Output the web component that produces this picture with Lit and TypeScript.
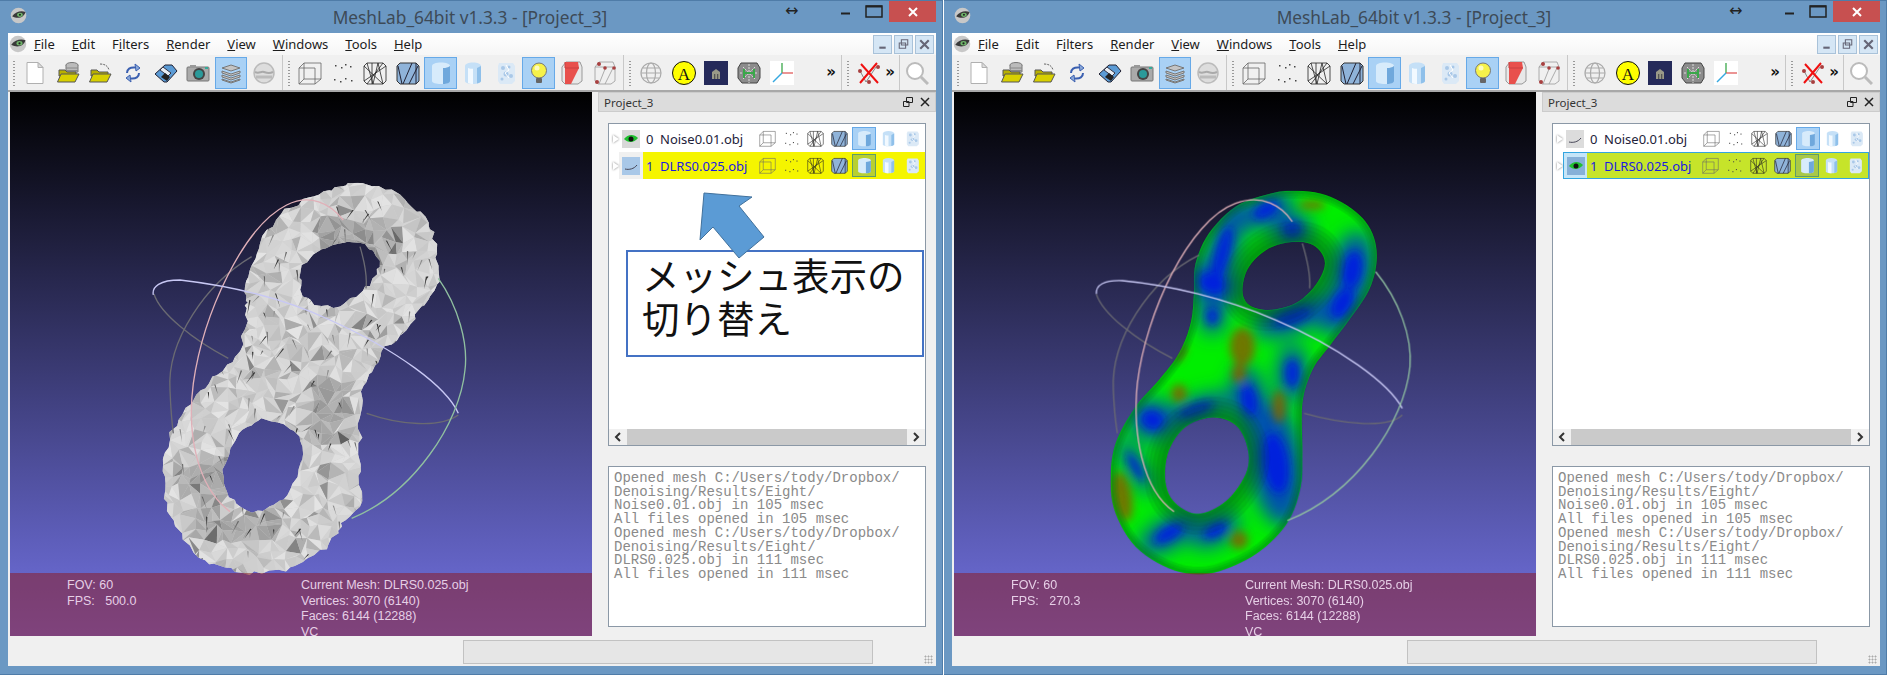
import { css, html, svg, LitElement } from "lit";
import { customElement, property } from "lit/decorators.js";

type Pt = [number, number];

function rng(seed: number) {
    return () => {
        seed = (seed + 0x6d2b79f5) | 0;
        let t = Math.imul(seed ^ (seed >>> 15), 1 | seed);
        t = (t + Math.imul(t ^ (t >>> 7), 61 | t)) ^ t;
        return ((t ^ (t >>> 14)) >>> 0) / 4294967296;
    };
}

// closed catmull-rom through the points, returned as a polyline path
function loop(points: Pt[], steps: number, jitter = 0, seed = 1) {
    const r = rng(seed);
    const n = points.length;
    let d = "";
    for (let i = 0; i < n; i++) {
        const [p0, p1, p2, p3] = [points[(i + n - 1) % n], points[i], points[(i + 1) % n], points[(i + 2) % n]];
        for (let s = 0; s < steps; s++) {
            const t = s / steps;
            const f = (a: number, b: number, c: number, e: number) =>
                0.5 * (2 * b + (c - a) * t + (2 * a - 5 * b + 4 * c - e) * t * t + (3 * b - a - 3 * c + e) * t * t * t);
            const x = f(p0[0], p1[0], p2[0], p3[0]) + (r() - 0.5) * jitter;
            const y = f(p0[1], p1[1], p2[1], p3[1]) + (r() - 0.5) * jitter;
            d += `${d ? "L" : "M"}${x.toFixed(1)} ${y.toFixed(1)}`;
        }
    }
    return d + "Z";
}

const ROUGH_OUTER: Pt[] = [[680, 45], [790, 65], [860, 120], [905, 180], [920, 250], [925, 330], [880, 400], [830, 480], [770, 530], [720, 600], [695, 680], [690, 780], [690, 900], [690, 1000], [640, 1060], [600, 1120], [520, 1180], [420, 1205], [320, 1205], [220, 1170], [150, 1090], [110, 1000], [100, 900], [115, 810], [160, 730], [220, 650], [290, 590], [340, 500], [350, 420], [350, 370], [365, 280], [400, 200], [470, 120], [550, 80], [620, 55]];
const ROUGH_UPPER: Pt[] = [[640, 215], [700, 225], [745, 275], [730, 330], [680, 375], [610, 410], [540, 395], [510, 350], [520, 290], [570, 240]];
const ROUGH_LOWER: Pt[] = [[400, 750], [480, 775], [520, 830], [510, 900], [470, 970], [420, 1015], [350, 1020], [300, 980], [280, 920], [300, 830], [350, 770]];
const ROUGH_SHAPE = loop(ROUGH_OUTER, 5, 15, 3) + loop(ROUGH_UPPER, 4, 12, 5) + loop(ROUGH_LOWER, 4, 12, 7);

const SMOOTH_OUTER: Pt[] = [[640, 62], [740, 75], [830, 125], [880, 190], [893, 270], [870, 360], [810, 450], [750, 530], [700, 600], [670, 700], [670, 850], [665, 950], [630, 1050], [560, 1130], [470, 1185], [370, 1213], [270, 1195], [170, 1130], [110, 1030], [95, 930], [110, 820], [170, 710], [240, 630], [300, 550], [335, 460], [345, 370], [350, 280], [390, 190], [470, 110], [560, 75]];
const SMOOTH_UPPER: Pt[] = [[650, 215], [710, 230], [738, 280], [710, 345], [650, 400], [570, 420], [510, 405], [490, 360], [510, 290], [570, 235]];
const SMOOTH_LOWER: Pt[] = [[400, 742], [470, 765], [505, 830], [505, 900], [460, 975], [400, 1020], [340, 1030], [280, 990], [258, 925], [270, 840], [320, 770]];
const SMOOTH_HOLES = loop(SMOOTH_UPPER, 6) + loop(SMOOTH_LOWER, 6);
const SMOOTH_SHAPE = loop(SMOOTH_OUTER, 6) + SMOOTH_HOLES;

// the triangles of the noisy mesh, on a jittered grid
function facets() {
    const r = rng(42);
    const cell = 32;
    const grid: Pt[][] = [];
    for (let j = 0; j < 40; j++) {
        const row: Pt[] = [];
        for (let i = 0; i < 30; i++) row.push([60 + i * cell + (r() - 0.5) * 28, 20 + j * cell + (r() - 0.5) * 28]);
        grid.push(row);
    }
    const out: { d: string; c: string }[] = [];
    const shade = (x: number, y: number) => {
        let v = 196 + r() * 32;
        const k = r();
        if (k < 0.2) v = 170 + r() * 24;
        if (k < 0.03) v = 130 + r() * 30;
        // creases round the holes are darker
        const crease = (x > 560 && x < 800 && y > 130 && y < 240) || (x > 180 && x < 420 && y > 1010 && y < 1100) || (x > 130 && x < 290 && y > 850 && y < 980) || (x > 530 && x < 640 && y > 620 && y < 800);
        if (crease) v -= 38;
        const g = Math.round(v);
        return `rgb(${g},${g},${g})`;
    };
    for (let j = 0; j < 39; j++) {
        for (let i = 0; i < 29; i++) {
            const a = grid[j][i], b = grid[j][i + 1], c = grid[j + 1][i + 1], e = grid[j + 1][i];
            const t1 = r() > 0.5 ? [a, b, c] : [a, b, e];
            const t2 = t1[2] === c ? [a, c, e] : [b, c, e];
            for (const t of [t1, t2]) {
                out.push({ d: `M${t[0][0]} ${t[0][1]}L${t[1][0]} ${t[1][1]}L${t[2][0]} ${t[2][1]}Z`, c: shade(t[0][0], t[0][1]) });
            }
        }
    }
    // thin black slivers along the folds
    for (let i = 0; i < 170; i++) {
        const x = 120 + r() * 780, y = 90 + r() * 1090, l = 14 + r() * 34, a = 1 + r() * 1.3;
        const dx = Math.cos(a) * l, dy = Math.sin(a) * l;
        const k = r();
        out.push({ d: `M${x} ${y}L${x + dx} ${y + dy}L${x + 4} ${y + 1}Z`, c: k > 0.6 ? "#333" : k > 0.3 ? "#666" : "#8a8a8a" });
    }
    return out;
}
const FACETS = facets();

const ringsLeft = {
    back: ["M690 230C705 280 712 320 708 355", "M985 735C930 775 810 765 710 730", "M72 372C90 430 190 510 295 565", "M365 260C230 340 110 510 120 660C122 710 126 760 130 790"],
    pink: "M300 1025C200 950 170 790 190 640C220 430 340 170 470 105C540 70 600 100 640 150",
    blue: "M985 730C950 650 800 540 600 450C450 380 280 345 150 330C90 330 65 350 70 375",
    green: "M925 325C985 410 1015 520 1005 600C990 760 850 970 665 1045",
};
const ringsRight = {
    back: ["M670 220C685 270 695 320 692 355", "M970 735C930 775 800 765 675 730", "M52 372C70 430 170 510 280 565", "M360 255C210 330 95 510 103 660C105 710 110 760 115 790"],
    pink: "M285 1025C190 960 160 790 175 640C200 430 330 150 470 100C550 70 610 110 640 155",
    blue: "M970 715C930 640 780 530 590 450C440 385 270 345 130 332C75 330 50 345 52 372",
    green: "M890 305C960 390 1000 500 993 590C975 760 830 970 625 1052",
};

const BLUE: number[][] = [[430, 250, 30, 120, 15], [400, 340, 60, 45, 20], [560, 120, 60, 30, -30], [640, 180, 40, 35, 0], [820, 300, 42, 80, 10], [640, 440, 85, 32, -20], [790, 400, 40, 70, 30], [590, 880, 55, 130, -8], [220, 750, 50, 42, 20], [270, 1090, 70, 30, -30], [410, 1080, 55, 28, -30], [170, 890, 18, 70, -30], [400, 440, 26, 36, 0], [640, 610, 30, 60, 0], [350, 720, 80, 24, -20], [510, 690, 34, 70, -10]];
const BROWN: number[][] = [[490, 530, 42, 64, 0], [480, 610, 24, 34, 0], [300, 670, 26, 30, 0], [130, 980, 32, 84, -10], [700, 105, 44, 14, 0], [600, 710, 22, 54, 0], [480, 1110, 30, 30, 0], [305, 550, 12, 34, 30]];
const BANDS = [28, 52, 76, 100, 124];

const ICONS: Record<string, unknown> = {
    doc: svg`<path d="M4 1.500h11l5 5v16H4z" fill="#fff" stroke="#b0b0b0"/><path d="M15 1.500v5h5z" fill="#ddd" stroke="#b0b0b0"/>`,
    open: svg`<ellipse cx="16" cy="4" rx="6" ry="2.500" fill="#bbb" stroke="#777"/><path d="M10 4v7h12V4" fill="#bbb" stroke="#777"/><path d="M10 7h12M10 9.500h12" stroke="#888"/><path d="M3 9h6l2 2h9v4H3z" fill="#b8b000" stroke="#555"/><path d="M1.500 21 5 13h18l-4 8z" fill="#d8d000" stroke="#555"/>`,
    recent: svg`<path d="M12 3c5 0 8 2 9 6" fill="none" stroke="#666" stroke-dasharray="2 1"/><path d="M3 9h6l2 2h9v4H3z" fill="#b8b000" stroke="#555"/><path d="M1.500 21 5 13h18l-4 8z" fill="#d8d000" stroke="#555"/>`,
    reload: svg`<path d="M6 12C6 8 9 6 14 6.500" fill="none" stroke="#3a5fb0" stroke-width="2"/><path d="M14 3l5 4-4 3z" fill="#8aa8d8" stroke="#3a5fb0"/><path d="M18 12c0 4-3 6-8 5.500" fill="none" stroke="#3a5fb0" stroke-width="2"/><path d="M10 21l-5-4 4-3z" fill="#8aa8d8" stroke="#3a5fb0"/>`,
    save: svg`<path d="M1 13 11 4h7l5 6-10 11h-3z" fill="#5b9bd5" stroke="#223"/><path d="M9 6l8 6-3 3-8-6z" fill="#e8eef5" stroke="#334"/><path d="M7 16l4-4 5 4-3 4z" fill="#222"/>`,
    camera: svg`<rect x="1" y="6" width="22" height="14" rx="1" fill="#aaa" stroke="#777"/><rect x="4" y="4" width="6" height="3" fill="#999"/><circle cx="13" cy="13" r="6" fill="#444"/><circle cx="13" cy="13" r="4" fill="#2a9a9a"/><rect x="19" y="6" width="3" height="2" fill="#3a9"/>`,
    layers: svg`<g fill="#c4c4c4" stroke="#777"><path d="M3 7l9-3 9 3-9 3z"/><path d="M3 10l9 3 9-3v2l-9 3-9-3z"/><path d="M3 14l9 3 9-3v2l-9 3-9-3z"/><path d="M3 18l9 3 9-3v1l-9 3-9-3z"/></g>`,
    globeFill: svg`<circle cx="12" cy="12" r="10" fill="#ddd" stroke="#bbb" stroke-width="1.500"/><path d="M3 11c4 2 6-1 9 0s5 2 9 0" fill="none" stroke="#aaa" stroke-width="2"/><path d="M4 16h16" stroke="#bbb" stroke-width="3"/>`,
    cube: svg`<g fill="none" stroke="#666" stroke-width=".8"><path d="M1 7h16v16H1z"/><path d="M1 7l5-5h17v16l-6 5M6 2v16h17M6 18l-5 5"/></g>`,
    dots: svg`<g fill="#444"><rect x="4" y="4" width="1.500" height="1.500"/><rect x="10" y="6" width="1.500" height="1.500"/><rect x="14" y="3" width="1.500" height="1.500"/><rect x="19" y="5" width="1.500" height="1.500"/><rect x="3" y="18" width="1.500" height="1.500"/><rect x="9" y="20" width="1.500" height="1.500"/><rect x="14" y="17" width="1.500" height="1.500"/><rect x="20" y="19" width="1.500" height="1.500"/></g>`,
    wire: svg`<g fill="none" stroke="#222" stroke-width=".8"><path d="M4 2l16 0 3 3v15l-3 3H4l-3-3V5z"/><path d="M4 2l6 21 5-21 5 21M1 5l19 18M20 2 4 23M9 2v21M23 5 1 20"/></g>`,
    flat: svg`<path d="M4 2l16 0 3 3v15l-3 3H4l-3-3V5z" fill="#8fb3d9" stroke="#333"/><g fill="none" stroke="#223"><path d="M7 23 16 2M13 23 22 5M2 5l4 18M20 2v21"/></g>`,
    solid: svg`<path d="M3 5c0-2 4-3.500 9-3.500s9 1.500 9 3.500v15c0 2-4 3-9 3s-9-1-9-3z" fill="#d7ebfb"/><path d="M14 7c3 0 5-.5 7-2v15c0 2-3 2.800-7 3z" fill="#6fa8dc"/>`,
    smooth: svg`<path d="M4 5c0-2 3.500-3.500 8-3.500s8 1.500 8 3.500v15c0 2-3.500 3-8 3s-8-1-8-3z" fill="#c5e0f7"/><path d="M7 7c2 .7 3 .8 5 .8V23c-2 0-4-.5-5-1z" fill="#f2f9ff"/><path d="M16 7l4-2v15c0 1-2 2-4 2.500z" fill="#8fc0ea"/>`,
    tex: svg`<path d="M5 2h14l2 3v15l-3 3H6l-2-3V5z" fill="#dbe9f6"/><g fill="#a9c8e8"><circle cx="9" cy="7" r="2"/><circle cx="15" cy="6" r="1.500"/><circle cx="12" cy="13" r="2.500"/><circle cx="17" cy="15" r="2"/><circle cx="8" cy="18" r="1.500"/></g><path d="M12 4l3 5-4 3 4 5" fill="none" stroke="#fff"/>`,
    bulb: svg`<circle cx="12" cy="9.500" r="7.500" fill="#f6f24a" stroke="#777"/><circle cx="10" cy="7" r="2.500" fill="#fdfbc0"/><rect x="9" y="17" width="6" height="5" rx="1" fill="#666"/>`,
    redBox: svg`<path d="M3 6 7 1h14l2 5v14l-4 3H6l-3-3z" fill="#e8e8e8" stroke="#999"/><path d="M6 1h13l1 6-8 16H6z" fill="#e8504c"/><path d="M6 1v6h14" fill="none" stroke="#c94040"/>`,
    points: svg`<g fill="none" stroke="#999" stroke-width=".8"><path d="M3 6 7 1h14l2 5v14l-4 3H6l-3-3z"/><path d="M7 23 13 8M13 23 21 7M3 6h18"/></g><g fill="#a84040"><circle cx="7" cy="3" r="2"/><circle cx="13" cy="7" r="1.800"/><circle cx="22" cy="7" r="1.800"/><circle cx="5" cy="21" r="2"/></g>`,
    globe: svg`<g fill="none" stroke="#aaa" stroke-width="1.200"><circle cx="12" cy="12" r="10"/><ellipse cx="12" cy="12" rx="4.500" ry="10"/><path d="M2 12h20M4 7h16M4 17h16"/></g>`,
    badgeA: svg`<circle cx="12" cy="12" r="11.500" fill="#ff0" stroke="#111"/><text x="12" y="18.500" text-anchor="middle" font-family="Liberation Serif" font-size="17" fill="#111">A</text>`,
    picture: svg`<rect width="24" height="24" y="0" fill="#252a5a"/><path d="M8 11l4-3 4 3v7H8z" fill="#9a9a88"/><path d="M10 13h1.300v5H10zM13 13h1.300v5H13z" fill="#555"/>`,
    tile: svg`<path d="M4 2h16l3 5v10l-3 5H5l-4-5V7z" fill="#8c8c8c" stroke="#444"/><path d="M6 6l12 12M18 6 6 18M3 12h18M12 3v19" stroke="#ddd" stroke-dasharray="2 1"/><path d="M7 8v9M17 8v9M7 12h10" fill="none" stroke="#3aa84a" stroke-width="2"/>`,
    axes: svg`<rect width="24" height="24" fill="#fff"/><path d="M12 12V2" stroke="#3aa84a" stroke-width="1.300"/><path d="M12 12h11" stroke="#e05a5a" stroke-width="1.300"/><path d="M12 12 3 21" stroke="#35a8e0" stroke-width="1.500"/>`,
    redX: svg`<path d="M3 10 9 21l10-15" fill="none" stroke="#888"/><g fill="#a84040"><circle cx="3" cy="10" r="2"/><circle cx="21" cy="6" r="2"/><circle cx="12" cy="21" r="2"/></g><path d="M4 3 21 22M20 2 3 22" stroke="#f01010" stroke-width="2"/>`,
    search: svg`<circle cx="10" cy="10" r="8" fill="#fff" stroke="#bbb" stroke-width="2"/><path d="M16 16l7 7" stroke="#bbb" stroke-width="3"/>`,
    logo: svg`<circle cx="12" cy="12" r="11" fill="#c8c8c8"/><path d="M3 13c5-7 13-8 19-6-2 7-10 11-19 6z" fill="#3a3a3a"/><ellipse cx="14" cy="11" rx="4" ry="3" fill="#6fb56a"/><circle cx="14" cy="11" r="1.500" fill="#222"/>`,
};

const icon = (name: string) => html`<svg class="ic" viewBox="0 0 24 24">${ICONS[name]}</svg>`;

const GROUPS = [
    ["doc", "open", "recent", "reload", "save", "camera", "*layers", "globeFill"],
    ["cube", "dots", "wire", "flat", "*solid", "smooth", "tex", "*bulb", "redBox", "points"],
];
const ROW_ICONS = ["cube", "dots", "wire", "flat", "*solid", "smooth", "tex"];
const MENUS: [string, string][] = [["F", "ile"], ["E", "dit"], ["Fi", "lters"], ["R", "ender"], ["V", "iew"], ["W", "indows"], ["T", "ools"], ["H", "elp"]];
const LOG = `Opened mesh C:/Users/tody/Dropbox/
Denoising/Results/Eight/
Noise0.01.obj in 105 msec
All files opened in 105 msec
Opened mesh C:/Users/tody/Dropbox/
Denoising/Results/Eight/
DLRS0.025.obj in 111 msec
All files opened in 111 msec`;

@customElement("mesh-window")
class MeshWindowElement extends LitElement {
    @property({ type: Boolean }) colored = false;
    @property() fps = "500.0";

    toolButton(entry: string) {
        const on = entry.startsWith("*");
        return html`<span class="tb ${on ? "on" : ""}">${icon(entry.replace("*", ""))}</span>`;
    }

    renderToolbar() {
        return html`
      <div class="toolbar">
        <div class="group g1"><i class="handle"></i>${GROUPS[0].map((e) => this.toolButton(e))}</div>
        <div class="group g2"><i class="handle"></i>${GROUPS[1].map((e) => this.toolButton(e))}</div>
        <div class="group g3"><i class="handle"></i>
          ${["globe", "badgeA", "picture", "tile", "axes"].map((e) => this.toolButton(e))}
          <b class="more">»</b>
        </div>
        <div class="group g4"><i class="handle"></i>${this.toolButton("redX")}<b class="more">»</b></div>
        <div class="group g5">${this.toolButton("search")}</div>
      </div>`;
    }

    renderMesh() {
        if (!this.colored) {
            return svg`
        <clipPath id="shape"><path d=${ROUGH_SHAPE} clip-rule="evenodd"></path></clipPath>
        <g clip-path="url(#shape)">
          <rect width="1100" height="1300" fill="#d0d0d0"></rect>
          ${FACETS.map((f) => svg`<path d=${f.d} fill=${f.c}></path>`)}
        </g>`;
        }
        const blob = (b: number[], fill: string, s: number) =>
            svg`<ellipse cx=${b[0]} cy=${b[1]} rx=${b[2] * s} ry=${b[3] * s} fill=${fill} transform="rotate(${b[4]} ${b[0]} ${b[1]})"></ellipse>`;
        const outer = loop(SMOOTH_OUTER, 6);
        return svg`
        <filter id="soft" x="-20%" y="-20%" width="140%" height="140%"><feGaussianBlur stdDeviation="28"></feGaussianBlur></filter>
        <filter id="core" x="-20%" y="-20%" width="140%" height="140%"><feGaussianBlur stdDeviation="12"></feGaussianBlur></filter>
        <clipPath id="shape"><path d=${SMOOTH_SHAPE} clip-rule="evenodd"></path></clipPath>
        <g clip-path="url(#shape)">
          <rect width="1100" height="1300" fill="#00ee00"></rect>
          <g filter="url(#soft)">
            ${BLUE.map((b) => blob(b, "#0050b0", 1.45))}
          </g>
          <g filter="url(#core)" opacity="0.8">
            ${BLUE.map((b) => blob(b, "#0018e8", 0.7))}
            ${BROWN.map((b) => blob(b, "#8a5a00", 0.9))}
          </g>
          <g fill="none" stroke="#004a20" stroke-linejoin="round">
            ${BANDS.map((w) => svg`<path d=${SMOOTH_HOLES} stroke-width=${w} stroke-opacity="0.13"></path>`)}
            ${BANDS.slice(0, 3).map((w) => svg`<path d=${outer} stroke-width=${w * 0.6} stroke-opacity="0.14"></path>`)}
          </g>
        </g>`;
    }

    renderRings() {
        const r = this.colored ? ringsRight : ringsLeft;
        return svg`
        <g fill="none" stroke-width="4">
          ${r.back.map((d) => svg`<path d=${d} stroke="#6a6a72"></path>`)}
          <path d=${r.pink} stroke="#e0b0b8"></path>
          <path d=${r.blue} stroke="#c8c8f4"></path>
          <path d=${r.green} stroke="#90c0a0"></path>
        </g>`;
    }

    renderRow(index: number, name: string) {
        const current = index === 1;
        const visible = this.colored ? current : !current;
        return html`
      <div class="row ${current ? "current" : ""}">
        <span class="arrow"></span>
        <span class="lead">
          <svg class="eye ${visible ? "shown" : "hidden"}" viewBox="0 0 18 18">
            ${visible
                ? svg`<path d="M2 9c4-5 10-5 14-1-4 5-10 5-14 1z" fill="#20c030"></path><circle cx="9" cy="9" r="2.500" fill="#111"></circle>`
                : svg`<path d="M3 12c4 1 9 0 12-4" fill="none" stroke="#445"></path>`}
          </svg>
        </span>
        <span class="body">
          <span class="num">${index}</span>
          <span class="name">${name}</span>
          <span class="row-icons">${ROW_ICONS.map((e) => this.toolButton(e))}</span>
        </span>
      </div>`;
    }

    render() {
        const tx = this.colored ? 125 : 120;
        return html`
      <div class="titlebar">
        <svg class="title-logo" viewBox="0 0 24 24">${ICONS.logo}</svg>
        <span class="title">MeshLab_64bit v1.3.3 - [Project_3]</span>
        <span class="cursor">↔</span>
        <span class="caps">
          <svg class="cap" viewBox="0 0 28 20"><path d="M8 12h9" stroke="#222" stroke-width="2"></path></svg>
          <svg class="cap" viewBox="0 0 28 20"><path d="M5 4.500h16v11H5z" fill="none" stroke="#222" stroke-width="1.500"></path><path d="M5 5h16" stroke="#222" stroke-width="2"></path></svg>
          <span class="close"><svg viewBox="0 0 14 14"><path d="M3 3l8 8M11 3l-8 8" stroke="#fff" stroke-width="2"></path></svg></span>
        </span>
      </div>
      <div class="client">
        <div class="menubar">
          <svg class="menu-logo" viewBox="0 0 24 24">${ICONS.logo}</svg>
          ${MENUS.map(([k, rest]) => html`<span class="menu">${k.length > 1 ? html`F<u>i</u>` : html`<u>${k}</u>`}${rest}</span>`)}
          <span class="mdi">
            <i><svg viewBox="0 0 16 16"><path d="M5 11h6" stroke="#667" stroke-width="2"></path></svg></i>
            <i><svg viewBox="0 0 16 16"><path d="M6 3.500h6v5H6zM4 6.500h6v5H4z" fill="#d5e6f5" stroke="#667"></path></svg></i>
            <i><svg viewBox="0 0 16 16"><path d="M4 4l8 8M12 4l-8 8" stroke="#667" stroke-width="2"></path></svg></i>
          </span>
        </div>
        ${this.renderToolbar()}
        <div class="main">
          <div class="viewport">
            <svg class="scene" viewBox="0 0 582 544">
              <g transform="translate(${tx} 78) scale(0.3333)">
                ${this.renderMesh()}
                ${this.renderRings()}
              </g>
            </svg>
            <div class="hud">
              <div>FOV: 60<br />FPS:   ${this.fps}</div>
              <div>Current Mesh: DLRS0.025.obj<br />Vertices: 3070 (6140)<br />Faces: 6144 (12288)<br />VC</div>
            </div>
          </div>
          <div class="dock">
            <div class="dock-title">
              <span>Project_3</span>
              <svg viewBox="0 0 12 12"><path d="M4.500 1.500h6v5h-6zM1.500 5.500h5.500v5h-5.500z" fill="#ddd" stroke="#222"></path></svg>
              <svg viewBox="0 0 12 12"><path d="M2 2l8 8M10 2l-8 8" stroke="#222" stroke-width="1.500"></path></svg>
            </div>
            <div class="dock-body">
              <div class="tree">
                <div class="rows">
                  ${this.renderRow(0, "Noise0.01.obj")}
                  ${this.renderRow(1, "DLRS0.025.obj")}
                </div>
                <div class="hscroll">
                  <svg viewBox="0 0 8 10"><path d="M6 1 2 5l4 4" fill="none" stroke="#333" stroke-width="2"></path></svg>
                  <i></i>
                  <svg viewBox="0 0 8 10"><path d="M2 1l4 4-4 4" fill="none" stroke="#333" stroke-width="2"></path></svg>
                </div>
                <slot></slot>
              </div>
              <pre class="log">${LOG}</pre>
            </div>
          </div>
        </div>
        <div class="status">
          <span class="status-box"></span>
          <span class="grip"></span>
        </div>
      </div>
    `;
    }

    static styles = css`
    :host{
        display: flex;
        flex-direction: column;
        width: 943px;
        height: 675px;
        box-sizing: border-box;
        padding: 0 6px 8px 8px;
        background: #6b98c3;
        border: 1px solid #4f7ca8;
        border-width: 1px 1px 1px 0;
        font-family: "Noto Sans", sans-serif;
    }
    .titlebar{
        height: 32px;
        flex: none;
        display: flex;
        align-items: center;
        justify-content: center;
        position: relative;
    }
    .title-logo{
        position: absolute;
        left: 2px;
        top: 6px;
        width: 17px;
        height: 17px;
    }
    .title{
        font-size: 17.3px;
        color: #3d4a57;
        margin-left: -4px;
    }
    .cursor{
        position: absolute;
        left: 777px;
        top: 0;
        font: 16px "DejaVu Sans", sans-serif;
        color: #222;
    }
    .caps{
        position: absolute;
        right: 0;
        top: 0;
        display: flex;
    }
    .cap{
        width: 28px;
        height: 21px;
    }
    .close{
        width: 47px;
        height: 21px;
        margin-left: 0;
        background: #c75050;
        display: flex;
        align-items: center;
        justify-content: center;
    }
    .close svg{
        width: 14px;
        height: 14px;
    }
    .client{
        flex: 1;
        min-height: 0;
        display: flex;
        flex-direction: column;
        background: #f0f0f0;
    }
    .menubar{
        height: 22px;
        flex: none;
        display: flex;
        align-items: center;
        background: linear-gradient(#fff, #f6f6f6);
        font-size: 13px;
        color: #1c1c1c;
        padding-left: 26px;
        position: relative;
    }
    .menu-logo{
        position: absolute;
        left: 1px;
        top: 2px;
        width: 18px;
        height: 18px;
    }
    .menu{
        margin-right: 17px;
    }
    .mdi{
        margin-left: auto;
        display: flex;
        gap: 2px;
        padding-right: 2px;
    }
    .mdi i{
        width: 17px;
        height: 17px;
        background: #d5e6f5;
        border: 1px solid #a9c2d9;
        display: block;
    }
    .mdi svg{
        width: 17px;
        height: 17px;
        display: block;
    }
    .toolbar{
        height: 35px;
        flex: none;
        display: flex;
        background: #f0f0f0;
        border-bottom: 2px solid #a8a8a8;
        box-sizing: content-box;
    }
    .group{
        display: flex;
        align-items: center;
        border-right: 1px solid #c8c8c8;
        box-sizing: border-box;
        flex: none;
        height: 35px;
    }
    .g1{
        width: 275px;
    }
    .g2{
        width: 341px;
    }
    .g3{
        width: 218px;
    }
    .g4{
        width: 58px;
    }
    .g5{
        border-right: 0;
        padding-left: 1px;
    }
    .handle{
        flex: none;
        width: 10.6px;
        height: 26px;
        box-sizing: border-box;
        margin-left: 0;
        padding-left: 4px;
        background: radial-gradient(circle, #999 0.8px, transparent 1px) 5px 0 / 2px 3px repeat-y;
    }
    .tb{
        flex: none;
        width: 32.7px;
        height: 32px;
        box-sizing: border-box;
        display: flex;
        align-items: center;
        justify-content: center;
        border: 1px solid transparent;
    }
    .tb.on{
        background: #a9d1f5;
        border-color: #66a9e8;
    }
    .ic{
        width: 24px;
        height: 24px;
        display: block;
    }
    .more{
        margin-left: auto;
        margin-right: 5px;
        font: bold 15px/1 "DejaVu Sans", sans-serif;
        color: #111;
    }
    .g4 .more{
        margin-right: 4px;
        margin-left: 0;
    }
    .main{
        flex: 1;
        min-height: 0;
        display: flex;
    }
    .viewport{
        width: 582px;
        margin-left: 2px;
        flex: none;
        position: relative;
        overflow: hidden;
        display: flex;
        flex-direction: column;
        justify-content: flex-end;
        background: linear-gradient(#000, #7272e2);
    }
    .scene{
        position: absolute;
        left: 0;
        top: 0;
        width: 582px;
        height: 544px;
    }
    .hud{
        position: relative;
        height: 63px;
        box-sizing: border-box;
        overflow: hidden;
        padding: 5px 0 0 57px;
        display: grid;
        grid-template-columns: 234px 1fr;
        background: rgba(140, 25, 30, 0.52);
        font: 12.5px/15.7px "Liberation Sans", sans-serif;
        color: #e6cfe6;
        white-space: pre;
    }
    .dock{
        flex: 1;
        min-width: 0;
        display: flex;
        flex-direction: column;
        margin-left: 6px;
    }
    .dock-title{
        height: 20px;
        flex: none;
        background: #dcdcdc;
        border: 1px solid #ccc;
        box-sizing: border-box;
        display: flex;
        align-items: center;
        gap: 5px;
        padding: 0 4px 0 5px;
        font-size: 11.5px;
        color: #333;
    }
    .dock-title span{
        margin-right: auto;
    }
    .dock-title svg{
        width: 12px;
        height: 12px;
    }
    .dock-body{
        flex: 1;
        min-height: 0;
        display: flex;
        flex-direction: column;
        gap: 20px;
        padding: 11px 10px 9px;
    }
    .tree{
        flex: none;
        height: 323px;
        box-sizing: border-box;
        background: #fff;
        border: 1px solid #8b98a6;
        display: flex;
        flex-direction: column;
        position: relative;
    }
    .rows{
        flex: 1;
        padding-top: 2px;
        display: flex;
        flex-direction: column;
    }
    .row{
        display: flex;
        align-items: center;
        height: 25px;
        margin-bottom: 1px;
    }
    .row.current{
        height: 27px;
    }
    .arrow{
        width: 0;
        height: 0;
        margin: 0 0 0 4px;
        border-left: 6px solid #fff;
        border-top: 4px solid transparent;
        border-bottom: 4px solid transparent;
        filter: drop-shadow(0 0 1px #777);
    }
    .lead{
        width: 24px;
        align-self: stretch;
        display: flex;
        align-items: center;
        justify-content: center;
        box-sizing: border-box;
    }
    .current .lead{
        background: #f0f0f0;
    }
    .eye{
        width: 18px;
        height: 18px;
    }
    .body{
        flex: 1;
        align-self: stretch;
        display: flex;
        align-items: center;
        font-size: 13px;
        color: #22223a;
        min-width: 0;
    }
    .num{
        margin-left: 3px;
        width: 14px;
    }
    .current .body{
        background: #f5f500;
        color: #1a1ae0;
    }
    .row-icons{
        margin-left: auto;
        display: flex;
        align-items: center;
        margin-right: 0;
    }
    .row-icons .tb{
        width: 24.3px;
        height: 23px;
    }
    .row-icons .ic{
        width: 17px;
        height: 17px;
    }
    .current .tb.on{
        background: #b8d030;
        border-color: #5f9c6a;
    }
    .eye.shown{
        background: #d8d8d8;
    }
    .eye.hidden{
        background: #a9c8e8;
    }
    .hscroll{
        height: 16px;
        flex: none;
        display: flex;
        align-items: center;
        background: #f0f0f0;
    }
    .hscroll svg{
        width: 18px;
        height: 10px;
        flex: none;
    }
    .hscroll i{
        flex: 1;
        align-self: stretch;
        background: #cacaca;
    }
    .log{
        flex: 1;
        min-height: 0;
        margin: 0;
        padding: 5px 0 0 5px;
        background: #fff;
        border: 1px solid #8b98a6;
        font: 14px/13.7px "Liberation Mono", monospace;
        color: #8a8a8a;
        overflow: hidden;
    }
    .status{
        height: 30px;
        flex: none;
        display: flex;
        position: relative;
        background: #f0f0f0;
    }
    .status-box{
        margin: 4px 0 2px 455px;
        width: 410px;
        background: #e6e6e6;
        border: 1px solid #c2c2c2;
        box-sizing: border-box;
    }
    .grip{
        position: absolute;
        right: 3px;
        bottom: 2px;
        width: 9px;
        height: 9px;
        background: radial-gradient(circle, #aaa 0.9px, transparent 1.1px) 0 0 / 3px 3px;
    }
    :host([colored]) .eye.shown{
        background: #86b0d8;
    }
    :host([colored]) .eye.hidden{
        background: #dcdcdc;
    }
    :host([colored]) .current .lead{
        background: #c5e5f8;
        border: 1px solid #33a5e0;
        border-right: 0;
    }
    :host([colored]) .current .body{
        background: #c6e42a;
        border: 1px solid #33a5e0;
        border-left: 0;
    }
    :host([colored]) .current .tb.on{
        background: #a8c848;
    }
    `;
}

@customElement("app-root")
class AppRootElement extends LitElement {
    render() {
        return html`
      <mesh-window fps="500.0">
        <div class="callout">
          <div class="callout-box">メッシュ表示の<br />切り替え</div>
          <svg class="callout-arrow" viewBox="0 0 70 70">
            <path d="M5 1 53 5 40 14 65 45 40 66 14 35 1 48z" fill="#5b9bd5" stroke="#41719c"></path>
          </svg>
        </div>
      </mesh-window>
      <mesh-window fps="270.3" colored></mesh-window>
    `;
    }

    static styles = css`
    :host{
        display: flex;
        gap: 1px;
        width: 1889px;
        height: 675px;
        background: #fff;
        overflow: hidden;
    }
    .callout{
        position: absolute;
        left: 17px;
        top: 126px;
        width: 298px;
        height: 107px;
    }
    .callout-box{
        width: 298px;
        height: 107px;
        box-sizing: border-box;
        background: #fff;
        border: 2px solid #4472c4;
        padding: 0 0 0 14px;
        font: 37.5px/43px "Noto Sans CJK JP", "Noto Sans", sans-serif;
        color: #111;
        white-space: nowrap;
    }
    .callout-arrow{
        position: absolute;
        left: 73px;
        top: -58px;
        width: 70px;
        height: 70px;
    }
    `;
}
